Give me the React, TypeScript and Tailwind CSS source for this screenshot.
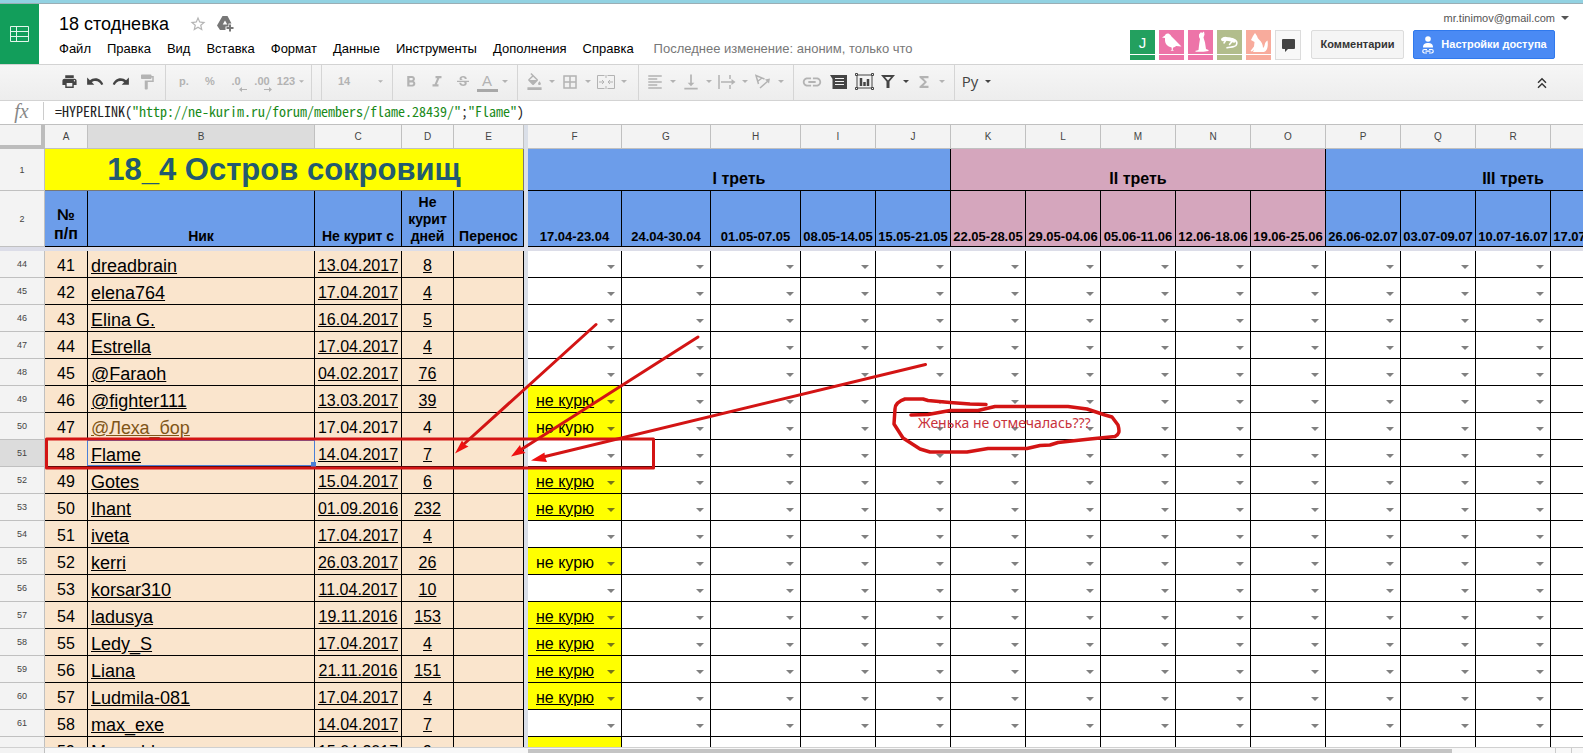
import React from "react";
import {
  MdBorderAll,
  MdFormatAlignLeft,
  MdFormatBold,
  MdFormatColorFill,
  MdFormatItalic,
  MdFormatPaint,
  MdFunctions,
  MdKeyboardDoubleArrowUp,
  MdLink,
  MdPrint,
  MdStarBorder,
  MdStrikethroughS,
  MdVerticalAlignBottom,
} from "react-icons/md";

type Row = {
  line: number;
  num: number;
  nick: string;
  date: string;
  days: string;
  mark?: "link" | "plain" | "empty";
  plain?: boolean;
};

const menus = ["Файл", "Правка", "Вид", "Вставка", "Формат", "Данные", "Инструменты", "Дополнения", "Справка"];

const weeks = [
  { col: "F", label: "17.04-23.04", pink: false },
  { col: "G", label: "24.04-30.04", pink: false },
  { col: "H", label: "01.05-07.05", pink: false },
  { col: "I", label: "08.05-14.05", pink: false },
  { col: "J", label: "15.05-21.05", pink: false },
  { col: "K", label: "22.05-28.05", pink: true },
  { col: "L", label: "29.05-04.06", pink: true },
  { col: "M", label: "05.06-11.06", pink: true },
  { col: "N", label: "12.06-18.06", pink: true },
  { col: "O", label: "19.06-25.06", pink: true },
  { col: "P", label: "26.06-02.07", pink: false },
  { col: "Q", label: "03.07-09.07", pink: false },
  { col: "R", label: "10.07-16.07", pink: false },
  { col: "S", label: "17.07-23.07", pink: false },
  { col: "T", label: "24.07-30.07", pink: false },
];

const rows: Row[] = [
  { line: 44, num: 41, nick: "dreadbrain", date: "13.04.2017", days: "8" },
  { line: 45, num: 42, nick: "elena764", date: "17.04.2017", days: "4" },
  { line: 46, num: 43, nick: "Elina G.", date: "16.04.2017", days: "5" },
  { line: 47, num: 44, nick: "Estrella", date: "17.04.2017", days: "4" },
  { line: 48, num: 45, nick: "@Faraoh", date: "04.02.2017", days: "76" },
  { line: 49, num: 46, nick: "@fighter111", date: "13.03.2017", days: "39", mark: "link" },
  { line: 50, num: 47, nick: "@Леха_бор", date: "17.04.2017", days: "4", mark: "plain", plain: true },
  { line: 51, num: 48, nick: "Flame", date: "14.04.2017", days: "7" },
  { line: 52, num: 49, nick: "Gotes", date: "15.04.2017", days: "6", mark: "link" },
  { line: 53, num: 50, nick: "Ihant", date: "01.09.2016", days: "232", mark: "link" },
  { line: 54, num: 51, nick: "iveta", date: "17.04.2017", days: "4" },
  { line: 55, num: 52, nick: "kerri", date: "26.03.2017", days: "26", mark: "plain" },
  { line: 56, num: 53, nick: "korsar310", date: "11.04.2017", days: "10" },
  { line: 57, num: 54, nick: "ladusya", date: "19.11.2016", days: "153", mark: "link" },
  { line: 58, num: 55, nick: "Ledy_S", date: "17.04.2017", days: "4", mark: "link" },
  { line: 59, num: 56, nick: "Liana", date: "21.11.2016", days: "151", mark: "link" },
  { line: 60, num: 57, nick: "Ludmila-081", date: "17.04.2017", days: "4", mark: "link" },
  { line: 61, num: 58, nick: "max_exe", date: "14.04.2017", days: "7" },
  { line: 62, num: 59, nick: "Mamald", date: "15.04.2017", days: "9", mark: "empty" },
];

const Caret = ({ className = "" }: { className?: string }) => (
  <svg viewBox="0 0 8 4" className={`h-1 w-2 shrink-0 ${className}`} fill="currentColor">
    <path d="M0 0h8L4 4z" />
  </svg>
);

const Swoosh = ({ className = "" }: { className?: string }) => (
  <svg width="18" height="18" viewBox="0 0 24 24" fill="currentColor" className={className}>
    <path d="M12.500 7C9.600 7 7.100 8 5.200 9.700L1.500 6v9.500H11l-3.400-3.400c1.300-1 3-1.600 4.900-1.600 3.800 0 6.800 2.300 7.800 5.500l2.700-.9C21.600 10.500 17.500 7 12.500 7z" />
  </svg>
);

const Tool = ({ label, children, dark = false }: { label: string; children: React.ReactNode; dark?: boolean }) => (
  <button
    aria-label={label}
    className={`flex h-full w-[26px] items-center justify-center pb-0.5 ${dark ? "text-[#444]" : "text-[#b3b3b3]"}`}
  >
    {children}
  </button>
);

const MenuTool = ({ label, children, dark = false }: { label: string; children: React.ReactNode; dark?: boolean }) => (
  <button
    aria-label={label}
    className={`flex h-full w-9 items-center pb-0.5 ${dark ? "text-[#444]" : "text-[#b3b3b3]"}`}
  >
    <span className="flex w-[22px] justify-center">{children}</span>
    <span className="flex w-[14px] justify-center">
      <Caret className="h-[3px] w-[6px]" />
    </span>
  </button>
);

const Group = ({ children, className = "px-[5px]" }: { children?: React.ReactNode; className?: string }) => (
  <div className={`flex h-full items-center border-r border-[#d5d5d5] ${className}`}>{children}</div>
);

const Avatar = ({ color, children }: { color: string; children: React.ReactNode }) => (
  <div className="w-[25px]">
    <div className={`flex h-6 items-center justify-center ${color}`}>{children}</div>
    <div className={`mt-px h-[5px] ${color}`} />
  </div>
);

const Header = () => (
  <header className="flex h-[60px] shrink-0 bg-white">
    <a href="#" aria-label="Таблицы" className="flex w-[39px] items-center justify-center bg-[#129e5b]">
      <svg width="19" height="16" viewBox="0 0 19 16" fill="none" stroke="#e4f6ec">
        <path d="M.5.5h18v15H.5zM6.500.5v15M.5 5.500h18M.5 10.500h18" />
      </svg>
    </a>
    <div className="pl-5 pt-[9px]">
      <div className="flex h-[22px] items-center">
        <h1 className="text-[18px] leading-[22px] text-black">18 стодневка</h1>
        <button aria-label="Пометить" className="ml-5 text-[18px] text-[#b5b5b5]">
          <MdStarBorder />
        </button>
        <button aria-label="Добавить на Диск" className="ml-2.5 text-[#777]">
          <svg width="18" height="16" viewBox="0 0 18 16" fill="currentColor">
            <path d="M5.500 0h5l4 7.500h-3v3h-3V14H3L0 9.500z" />
            <path d="M8 4.500l2.300 4H5.700z" fill="#fff" />
            <path d="M12 8.500h2V11h2.500v2H14v2.500h-2V13H9.500v-2H12z" />
          </svg>
        </button>
      </div>
      <nav className="mt-[5px] flex items-center gap-4 text-[13px] leading-[18px] text-black">
        {menus.map((menu) => (
          <button key={menu}>{menu}</button>
        ))}
        <span className="ml-1 text-[#777]">Последнее изменение: аноним, только что</span>
      </nav>
    </div>
    <div className="ml-auto flex flex-col items-end pt-[7px]">
      <button className="mr-[14px] flex items-center gap-1.5 text-[11px] leading-[14px] text-[#555]">
        mr.tinimov@gmail.com
        <Caret />
      </button>
      <div className="mr-[28px] mt-[5px] flex items-start">
        <div className="flex gap-1">
          <Avatar color="bg-[#23a05f]">
            <span className="text-[15px] leading-none text-white">J</span>
          </Avatar>
          <Avatar color="bg-[#ed74a8]">
            <svg width="21" height="20" viewBox="0 0 21 20" fill="#fff">
              <path d="M1 5.500L4 3.500C4.500 1 8 .6 9.500 3c.8 2.300 4 3.800 6 6.500l5 5-5.500-.6c-1 1-2 1.400-3 1.600l-.3 2.200 1.300 1H9.500l1.300-1-.2-2.300C6.500 14.500 4.200 12 4 8.500V6z" />
            </svg>
          </Avatar>
          <Avatar color="bg-[#ed74a8]">
            <svg width="18" height="22" viewBox="0 0 18 22" fill="#fff">
              <path d="M7 3.500L9 1l1 1 2-1.500.5 3-1 3 1.500 5 1 6.500 2.500 1v1l-5 .8H4L3 20l3.500-1 .7-6L8 8 7 6z" />
            </svg>
          </Avatar>
          <Avatar color="bg-[#b2bd8c]">
            <svg width="20" height="16" viewBox="0 0 20 16" fill="none" stroke="#fff" strokeLinecap="round">
              <path d="M2 5.500c1.500-2 3-2.500 5-1.500 3 .5 5 0 8 2 3 2 2 6-1 6.500-2.500.8-5 .6-7 1.300" strokeWidth="1.600" />
              <path d="M3 5.500c3-1 7-.5 11 1.500" strokeWidth="3.500" />
              <path d="M6 6l-2 3M12 7.500L9.500 10.500" strokeWidth="1.500" />
            </svg>
          </Avatar>
          <Avatar color="bg-[#f8ab9c]">
            <svg width="20" height="21" viewBox="0 0 20 21" fill="#fff">
              <path d="M4 4L6 1l2 3c.5 1.500 1 2.500 2 3.500 2.500 2 4 5 4 8.500 1.500-1 1.500-3 2-4.500s1.500-2.500 2.500-3c.5 3 1 10-3.500 11.500H4l1-2.500L3 19.500 1.500 19 5 14.500 5.500 10 2 8z" />
            </svg>
          </Avatar>
        </div>
        <button
          aria-label="Чат"
          className="ml-1 flex h-[30px] w-[26px] items-center justify-center border border-[#dcdcdc] bg-[#f8f8f8]"
        >
          <svg width="13" height="13" viewBox="0 0 13 13" fill="#444">
            <path d="M1 0h11q1 0 1 1v8q0 1-1 1H6l-3 3v-3H1Q0 10 0 9V1Q0 0 1 0z" />
          </svg>
        </button>
        <button className="ml-2.5 h-[29px] w-[93px] rounded-[2px] border border-[#dcdcdc] bg-[#f5f5f5] text-[11px] font-bold text-[#333]">
          Комментарии
        </button>
        <button className="ml-[9px] flex h-[29px] w-[142px] items-center justify-center gap-1.5 whitespace-nowrap rounded-[2px] border border-[#3079ed] bg-[#4a8af4] text-[11px] font-bold text-white">
          <svg width="14" height="18" viewBox="0 0 14 18" fill="#fff">
            <circle cx="7" cy="3" r="2.800" />
            <path d="M2 11.500C2 8 4 7 7 7s5 1 5 4.500z" />
            <path d="M6 13.500H3.500a1.700 1.700 0 000 3.500H6M8 13.500h2.500a1.700 1.700 0 010 3.500H8M4.500 15.200h5" fill="none" stroke="#fff" strokeWidth="1.200" />
          </svg>
          Настройки доступа
        </button>
      </div>
    </div>
  </header>
);

const Toolbar = () => (
  <div
    role="toolbar"
    className="flex h-[37px] shrink-0 items-center border-y border-[#d3d3d3] bg-linear-to-b from-[#f6f6f6] to-[#ededed] text-[11px]"
  >
    <Group className="pl-[56px] pr-[5px]">
      <Tool label="Печать" dark><MdPrint size={17} /></Tool>
      <Tool label="Отменить" dark><Swoosh /></Tool>
      <Tool label="Повторить" dark><Swoosh className="-scale-x-100" /></Tool>
      <Tool label="Копировать форматирование"><MdFormatPaint size={18} /></Tool>
    </Group>
    <Group>
      <Tool label="Денежный формат"><b>р.</b></Tool>
      <Tool label="Процентный формат"><b>%</b></Tool>
      <Tool label="Меньше знаков">
        <span className="relative font-bold">
          .0
          <svg className="absolute -right-1.5 -bottom-0.5" width="8" height="5" viewBox="0 0 8 5" fill="currentColor">
            <path d="M0 2.500L3 0v2h5v1H3v2z" />
          </svg>
        </span>
      </Tool>
      <Tool label="Больше знаков">
        <span className="relative font-bold">
          .00
          <svg className="absolute -right-0.5 -bottom-0.5" width="8" height="5" viewBox="0 0 8 5" fill="currentColor">
            <path d="M8 2.500L5 0v2H0v1h5v2z" />
          </svg>
        </span>
      </Tool>
      <button className="flex h-full w-[31px] items-center justify-center gap-1 pb-0.5 font-bold text-[#b3b3b3]">
        123
        <Caret className="h-[3px] w-[5px]" />
      </button>
    </Group>
    <Group className="w-[10px]" />
    <Group className="w-[71px] pl-4 pr-[9px] pb-0.5 text-[#b3b3b3]">
      <select aria-label="Размер шрифта" className="min-w-0 flex-1 appearance-none bg-transparent font-bold outline-none">
        <option>14</option>
      </select>
      <Caret className="h-[3px] w-[5px]" />
    </Group>
    <Group>
      <Tool label="Полужирный"><MdFormatBold size={18} /></Tool>
      <Tool label="Курсив"><MdFormatItalic size={18} /></Tool>
      <Tool label="Зачеркнутый"><MdStrikethroughS size={16} /></Tool>
      <MenuTool label="Цвет текста">
        <span className="w-[21px] border-b-[3px] border-[#a8a8a8] text-center text-[15px] leading-[17px]">A</span>
      </MenuTool>
    </Group>
    <Group className="pl-[5px] pr-[7px]">
      <MenuTool label="Цвет заливки"><MdFormatColorFill size={17} /></MenuTool>
      <MenuTool label="Границы"><MdBorderAll size={18} /></MenuTool>
      <MenuTool label="Объединить ячейки">
        <svg width="18" height="14" viewBox="0 0 18 14" fill="none" stroke="currentColor">
          <path d="M7.500.5h-7v13h7M10.500.5h7v13h-7" />
          <path d="M9 0v3M9 11v3M2 7h5M16 7h-5M5 5l2 2-2 2M13 5l-2 2 2 2" />
        </svg>
      </MenuTool>
    </Group>
    <Group>
      <MenuTool label="Выравнивание по горизонтали"><MdFormatAlignLeft size={18} /></MenuTool>
      <MenuTool label="Выравнивание по вертикали"><MdVerticalAlignBottom size={20} /></MenuTool>
      <MenuTool label="Перенос текста">
        <svg width="18" height="14" viewBox="0 0 18 14" fill="none" stroke="currentColor" strokeWidth="1.500">
          <path d="M1 0v14M12 0v4M12 10v4M3 7h11" />
          <path d="M13.500 4l4 3-4 3z" fill="currentColor" stroke="none" />
        </svg>
      </MenuTool>
      <MenuTool label="Поворот текста">
        <svg width="16" height="15" viewBox="0 0 16 15" fill="none" stroke="currentColor" strokeWidth="1.500">
          <path d="M3.500 10L1 1.500l8.500 3.500M3 7l4-3M5 14l8-7" />
          <path d="M10 5.500l5-1-1 5z" fill="currentColor" stroke="none" />
        </svg>
      </MenuTool>
    </Group>
    <Group>
      <Tool label="Вставить ссылку"><MdLink size={22} /></Tool>
      <Tool label="Вставить комментарий" dark>
        <svg width="17" height="14" viewBox="0 0 17 14">
          <path d="M0 0h17v14H2.500V4z" fill="currentColor" />
          <path d="M5 3.500h9M5 6.500h9M5 9.500h9" stroke="#f2f2f2" />
        </svg>
      </Tool>
      <Tool label="Вставить диаграмму" dark>
        <svg width="19" height="17" viewBox="0 0 19 17" fill="none" stroke="currentColor">
          <path d="M2 2h15v13H2z" />
          <path d="M.5.5h2v2h-2zM16.500.5h2v2h-2zM.5 14.500h2v2h-2zM16.500 14.500h2v2h-2z" fill="#f2f2f2" />
          <path d="M6 13V5M9.500 13V9M13 13V6" strokeWidth="2.500" />
        </svg>
      </Tool>
      <MenuTool label="Фильтр" dark>
        <svg width="14" height="13" viewBox="0 0 14 13" fill="currentColor">
          <path d="M0 0h14L8.500 6.500V13h-3V6.500zM4 2l3 3.500L10 2z" fillRule="evenodd" />
        </svg>
      </MenuTool>
      <MenuTool label="Функции"><MdFunctions size={18} /></MenuTool>
    </Group>
    <div className="flex h-full items-center px-1">
      <MenuTool label="Способ ввода" dark>
        <span className="font-['Open_Sans',sans-serif] text-[15px]">Ру</span>
      </MenuTool>
    </div>
    <button aria-label="Свернуть" className="ml-auto mr-8 text-[#333]">
      <MdKeyboardDoubleArrowUp size={18} />
    </button>
  </div>
);

const FormulaBar = () => (
  <div className="flex h-6 shrink-0 items-center border-b border-[#c0c0c0] bg-white pb-1">
    <span className="w-11 border-r border-[#ccc] text-center font-['Liberation_Serif',serif] text-[20px] leading-[18px] text-[#888] italic">
      fx
    </span>
    <div
      role="textbox"
      aria-label="Формула"
      className="flex-1 pl-[11px] font-['Noto_Sans_Mono_CJK_SC','Liberation_Mono',monospace] text-[14px] leading-[18px] whitespace-pre text-[#222]"
    >
      =HYPERLINK(<span className="text-[#1a8a1a]">"http://ne-kurim.ru/forum/members/flame.28439/"</span>;
      <span className="text-[#1a8a1a]">"Flame"</span>)
    </div>
  </div>
);

const colHead = "h-6 border-r border-b border-[#c0c0c0] bg-[#f3f3f3] p-0 font-normal text-[10px] leading-[14px] text-[#444]";
const rowHead = "border-r border-b border-[#c0c0c0] bg-[#f3f3f3] p-0 text-center font-normal text-[9px] leading-[14px] text-[#444]";
const third = "border-r border-b border-black px-0 pt-0 pb-[2px] align-bottom font-bold text-[16px] leading-[18px] text-black";
const label = "border-r border-b border-black px-0 pt-0 pb-px align-bottom font-bold text-[14px] leading-[17px] text-black";
const person = "border-r border-b border-black bg-[#fae5cd] px-0 pt-0 pb-px align-bottom leading-5 whitespace-nowrap";

const Sheet = () => (
  <table className="w-max table-fixed border-separate border-spacing-0">
    <colgroup>
      <col className="w-[45px]" />
      <col className="w-[43px]" />
      <col className="w-[227px]" />
      <col className="w-[87px]" />
      <col className="w-[52px]" />
      <col className="w-[70px]" />
      <col className="w-[4px]" />
      <col className="w-[94px]" />
      <col className="w-[89px]" />
      <col className="w-[90px]" />
      {weeks.slice(3).map((week) => (
        <col key={week.col} className="w-[75px]" />
      ))}
    </colgroup>
    <thead>
      <tr>
        <th className="h-6 border-r-4 border-b-4 border-[#bcbcbc] bg-[#f3f3f3] p-0" />
        {["A", "B", "C", "D", "E"].map((col) => (
          <th key={col} className={`${colHead} ${col === "B" ? "bg-[#dcdcdc]!" : ""}`}>{col}</th>
        ))}
        <th className="bg-[#dadfe8] p-0" />
        {weeks.map((week) => (
          <th key={week.col} className={colHead}>{week.col}</th>
        ))}
      </tr>
      <tr>
        <th className={`${rowHead} h-[42px]`}>1</th>
        <th colSpan={5} className="border-r border-b border-[#777] bg-[#ff0] p-0 text-center text-[31px] leading-9 font-bold text-[#235a70]">
          18_4 Остров сокровищ
        </th>
        <th className="bg-[#dadfe8] p-0" />
        <th colSpan={5} className={`${third} bg-[#6c9dea]`}>I треть</th>
        <th colSpan={5} className={`${third} bg-[#d5a6bd]`}>II треть</th>
        <th colSpan={5} className={`${third} bg-[#6c9dea]`}>III треть</th>
      </tr>
      <tr>
        <th className={`${rowHead} h-14`}>2</th>
        <th className={`${label} bg-[#6c9dea] pb-[3px]! text-[16px]! leading-[19px]!`}>№<br />п/п</th>
        <th className={`${label} bg-[#6c9dea]`}>Ник</th>
        <th className={`${label} bg-[#6c9dea] whitespace-nowrap`}>Не курит с</th>
        <th className={`${label} bg-[#6c9dea]`}>Не<br />курит<br />дней</th>
        <th className={`${label} bg-[#6c9dea]`}>Перенос</th>
        <th className="bg-[#dadfe8] p-0" />
        {weeks.map((week) => (
          <th
            key={week.col}
            className={`${label} text-[13px]! whitespace-nowrap ${week.pink ? "bg-[#d5a6bd]" : "bg-[#6c9dea]"}`}
          >
            {week.label}
          </th>
        ))}
      </tr>
      <tr>
        <th colSpan={22} className="h-1 bg-[#dcdde8] p-0" />
      </tr>
    </thead>
    <tbody>
      {rows.map((row) => {
        const active = row.line === 51;
        return (
          <tr key={row.line}>
            <th className={`${rowHead} h-[27px] ${active ? "bg-[#dcdcdc]!" : ""}`}>{row.line}</th>
            <td className={`${person} text-center text-[16px]`}>{row.num}</td>
            <td className={`${person} relative pl-[3px]! text-[18px]`}>
              <a href="#" className={`underline ${row.plain ? "text-[#7f5518]" : "text-black"}`}>{row.nick}</a>
              {active && (
                <span className="absolute -inset-x-px inset-y-0 z-10 border border-[#4a7fd6]">
                  <span className="absolute -right-[2px] -bottom-[2px] size-[5px] bg-[#4a7fd6]" />
                </span>
              )}
            </td>
            <td className={`${person} text-center text-[16px] ${row.plain ? "" : "underline"}`}>{row.date}</td>
            <td className={`${person} text-center text-[16px] ${row.plain ? "" : "underline"}`}>{row.days}</td>
            <td className={person} />
            <td className="bg-[#dadfe8] p-0" />
            {weeks.map((week) => {
              const marked = week.col === "F" && row.mark;
              return (
                <td
                  key={week.col}
                  className={`border-r border-b border-black px-0 pt-0 pb-px align-bottom ${marked ? "bg-[#ff0]" : "bg-white"}`}
                >
                  <div className="flex h-5 items-center pr-[6px] pl-2">
                    {marked && row.mark !== "empty" && (
                      <span className={`text-[16px] leading-5 whitespace-nowrap ${row.mark === "link" ? "underline" : ""}`}>
                        не курю
                      </span>
                    )}
                    <button aria-label="Выбрать" className="ml-auto pt-0.5">
                      <Caret className={marked ? "text-[#77751a]" : "text-[#808080]"} />
                    </button>
                  </div>
                </td>
              );
            })}
          </tr>
        );
      })}
    </tbody>
  </table>
);

// hand-drawn notes lying over the cells
const Notes = () => (
  <>
    <svg
      className="pointer-events-none absolute top-0 left-0 z-20"
      width="1200"
      height="400"
      viewBox="0 125 1200 400"
      fill="none"
      stroke="#d31414"
      strokeWidth="3"
      strokeLinecap="round"
      strokeLinejoin="round"
    >
      <path d="M46.500 439h607v29h-607z" />
      <path d="M596 324.500L464 444M698 337L522 449M925.500 364.500L543 457" />
      <g fill="#ee1111" stroke="none">
        <path d="M455 453.500l7-13 2.500 4 4 2z" />
        <path d="M511 456.500l9-11.500 1.500 4.500 4 3.500z" />
        <path d="M531 460.500l13.500-8 .5 4.500 2 5z" />
      </g>
      <path
        strokeWidth="3.500"
        d="M986 404.500L970 404 950 402.500 928 400.500 923 399H905C899 401 895 404 895 409L894 424 903 438 920 449 930 452H967L988 448.500H1027L1040 445.500 1050 445 1058 442.500 1090 439 1115 436.500C1119 434 1120 432 1118 425L1112 417 1105 415 1087 409 1068 406.500H995L978 410.500H950L928 414.500 911 415"
      />
    </svg>
    <p className="pointer-events-none absolute top-[288px] left-[918px] z-20 font-['Noto_Sans',sans-serif] text-[14px] leading-5 whitespace-nowrap text-[#c8323c]">
      Женька не отмечалась???
    </p>
  </>
);

export default function App() {
  return (
    <div className="flex h-screen flex-col overflow-hidden bg-white font-['Liberation_Sans',Arial,sans-serif] text-black">
      <div className="h-1 shrink-0 border-b border-[#9aaeb5] bg-[#92d2e2]" />
      <Header />
      <Toolbar />
      <FormulaBar />
      <main className="relative min-h-0 flex-1 overflow-hidden">
        <Sheet />
        <Notes />
      </main>
      <div className="flex h-[6px] shrink-0 border-t border-[#d0d0d0] bg-[#f8f8f8]">
        <div className="w-[45px] border-r border-[#c0c0c0] bg-[#f3f3f3]" />
        <div className="flex flex-1 pt-px pl-[483px]">
          <div className="w-[90%] bg-[#c4c4c4]" />
        </div>
        <div className="w-4 border-l border-[#ccc]" />
        <div className="w-3 border-l border-[#ccc]" />
      </div>
    </div>
  );
}
